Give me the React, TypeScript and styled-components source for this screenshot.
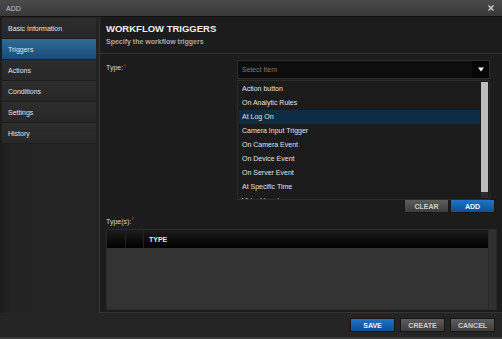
import { createGlobalStyle, styled } from 'styled-components';

const GlobalStyle = createGlobalStyle`
  html, body {
    margin: 0;
    padding: 0;
    background: #232323;
  }
  body {
    font-family: "Liberation Sans", Arial, sans-serif;
    font-size: 7px;
    color: #dedede;
  }
`;

const Window = styled.div`
  width: 502px;
  height: 339px;
  display: flex;
  flex-direction: column;
  background: #242424;
  border-bottom: 2px solid #3a3a3a;
  box-sizing: border-box;
`;

const TitleBar = styled.div`
  height: 16px;
  flex: none;
  display: flex;
  align-items: center;
  justify-content: space-between;
  padding: 0 8px 0 6px;
  background: linear-gradient(#4a4a4a, #383838);
  border-bottom: 1px solid #121212;
  color: #c4c4c4;
`;

const CloseIcon = styled.svg`
  width: 6px;
  height: 6px;
`;

const Body = styled.div`
  flex: 1;
  display: flex;
  min-height: 0;
`;

const Sidebar = styled.nav`
  width: 94px;
  flex: none;
  padding: 1px 0 0 2px;
  background: linear-gradient(90deg, #1c1c1c, #232323 12px, #242424);
`;

const NavItem = styled.div<{ $active?: boolean }>`
  height: 20px;
  display: flex;
  align-items: center;
  padding-left: 6px;
  border-bottom: 1px solid #1d1d1d;
  color: #e4e4e4;
  background: ${(p) =>
    p.$active ? 'linear-gradient(#2f6b98, #1c4b74)' : 'linear-gradient(#2d2d2d, #272727)'};
`;

const Main = styled.section`
  flex: 1;
  display: flex;
  flex-direction: column;
  margin-left: 3px;
  background: #1c1c1c;
  border-left: 1px solid #343434;
  border-bottom: 1px solid #343434;
`;

const Header = styled.header`
  height: 37px;
  flex: none;
  padding: 6px 0 0 6px;
  box-sizing: border-box;
  border-bottom: 1px solid #313131;
`;

const Title = styled.h1`
  margin: 0;
  font-size: 9.5px;
  font-weight: bold;
  color: #efefef;
  line-height: 12px;
`;

const Subtitle = styled.p`
  margin: 2px 0 0;
  font-size: 7px;
  font-weight: bold;
  color: #a9a9a9;
  line-height: 10px;
`;

const Content = styled.div`
  flex: 1;
  display: flex;
  flex-direction: column;
  padding: 6px 5px 2px 6px;
`;

const FieldRow = styled.div`
  display: flex;
  justify-content: space-between;
  height: 139px;
`;

const Label = styled.label`
  padding-top: 3px;
  color: #d6d6d6;
  line-height: 10px;
`;

const Required = styled.span`
  color: #d21d1d;
  vertical-align: top;
  font-size: 7px;
  line-height: 7px;
`;

const SelectWrap = styled.div`
  position: relative;
  width: 253px;
  margin-right: 7px;
  height: 19px;
`;

const SelectBox = styled.div`
  height: 19px;
  box-sizing: border-box;
  display: flex;
  align-items: center;
  justify-content: space-between;
  border: 1px solid #2e2e2e;
  background: #0e0e0e;
  color: #7a7a7a;
  padding-left: 4px;
`;

const Arrow = styled.span`
  width: 17px;
  height: 17px;
  display: flex;
  align-items: center;
  justify-content: center;
  background: #050505;
`;

const Dropdown = styled.div`
  position: absolute;
  top: 20px;
  left: 0;
  right: 0;
  height: 120px;
  box-sizing: border-box;
  display: flex;
  background: #1b1b1b;
  border: 1px solid #2c2c2c;
  z-index: 2;
`;

const OptionList = styled.ul`
  flex: 1;
  margin: 0;
  padding: 1px 1px 0;
  list-style: none;
  overflow: hidden;
`;

const Option = styled.li<{ $selected?: boolean }>`
  height: 14px;
  line-height: 14px;
  padding-left: 3px;
  white-space: nowrap;
  color: #e2e2e2;
  background: ${(p) => (p.$selected ? '#0f2c42' : 'transparent')};
`;

const ScrollTrack = styled.div`
  width: 7px;
  margin: 1px 1px 1px 0;
  background: #2c2c2c;
`;

const ScrollThumb = styled.div`
  height: 110px;
  background: #bdbdbd;
`;

const ButtonRow = styled.div`
  display: flex;
  justify-content: flex-end;
  gap: 1px;
  padding-right: 2px;
`;

const Button = styled.button<{ $primary?: boolean }>`
  width: 45px;
  height: 14px;
  padding: 0;
  font-family: inherit;
  font-size: 7px;
  font-weight: bold;
  border: 1px solid #161616;
  color: ${(p) => (p.$primary ? '#f2f2f2' : '#cfcfcf')};
  background: ${(p) =>
    p.$primary ? 'linear-gradient(#1f74c6, #0b4f95)' : 'linear-gradient(#5e5e5e, #3c3c3c)'};
`;

const TypesLabel = styled.div`
  margin-top: 3px;
  height: 11px;
  line-height: 11px;
  color: #d6d6d6;
`;

const Table = styled.div`
  flex: 1;
  margin-top: 2px;
  display: flex;
  background: #333333;
  border: 1px solid #2a2a2a;
`;

const TableMain = styled.div`
  flex: 1;
`;

const TableHead = styled.div`
  display: grid;
  grid-template-columns: 18px 18px 1fr;
  height: 18px;
  background: linear-gradient(#1c1c1c, #000);
`;

const HeadCell = styled.div`
  display: flex;
  align-items: center;
  padding-left: 5px;
  font-weight: bold;
  color: #e6e6e6;
  & + & {
    border-left: 1px solid #222;
  }
`;

const ScrollGutter = styled.div`
  width: 7px;
  background: #303030;
  border-left: 1px solid #2a2a2a;
`;

const Footer = styled.footer`
  height: 24px;
  flex: none;
  display: flex;
  align-items: center;
  justify-content: flex-end;
  gap: 5px;
  padding-right: 7px;
`;

const triggers = [
  'Action button',
  'On Analytic Rules',
  'At Log On',
  'Camera Input Trigger',
  'On Camera Event',
  'On Device Event',
  'On Server Event',
  'At Specific Time',
  'Virtual Input',
];

const navItems = ['Basic Information', 'Triggers', 'Actions', 'Conditions', 'Settings', 'History'];

function App() {
  return (
    <>
      <GlobalStyle />
      <Window>
        <TitleBar>
          <span>ADD</span>
          <CloseIcon viewBox="0 0 6 6">
            <path d="M0.5 0.5L5.5 5.5M5.5 0.5L0.5 5.5" stroke="#cfcfcf" strokeWidth="1.4" />
          </CloseIcon>
        </TitleBar>
        <Body>
          <Sidebar>
            {navItems.map((item) => (
              <NavItem key={item} $active={item === 'Triggers'}>
                {item}
              </NavItem>
            ))}
          </Sidebar>
          <Main>
            <Header>
              <Title>WORKFLOW TRIGGERS</Title>
              <Subtitle>Specify the workflow triggers</Subtitle>
            </Header>
            <Content>
              <FieldRow>
                <Label>
                  Type:<Required>*</Required>
                </Label>
                <SelectWrap>
                  <SelectBox>
                    <span>Select Item</span>
                    <Arrow>
                      <svg width="6" height="5" viewBox="0 0 6 5">
                        <path d="M0 0.5H6L3 4.5Z" fill="#f2f2f2" />
                      </svg>
                    </Arrow>
                  </SelectBox>
                  <Dropdown>
                    <OptionList>
                      {triggers.map((t) => (
                        <Option key={t} $selected={t === 'At Log On'}>
                          {t}
                        </Option>
                      ))}
                    </OptionList>
                    <ScrollTrack>
                      <ScrollThumb />
                    </ScrollTrack>
                  </Dropdown>
                </SelectWrap>
              </FieldRow>
              <ButtonRow>
                <Button>CLEAR</Button>
                <Button $primary>ADD</Button>
              </ButtonRow>
              <TypesLabel>
                Type(s):<Required>*</Required>
              </TypesLabel>
              <Table>
                <TableMain>
                  <TableHead>
                    <HeadCell />
                    <HeadCell />
                    <HeadCell>TYPE</HeadCell>
                  </TableHead>
                </TableMain>
                <ScrollGutter />
              </Table>
            </Content>
          </Main>
        </Body>
        <Footer>
          <Button $primary>SAVE</Button>
          <Button>CREATE</Button>
          <Button>CANCEL</Button>
        </Footer>
      </Window>
    </>
  );
}

export default App;
